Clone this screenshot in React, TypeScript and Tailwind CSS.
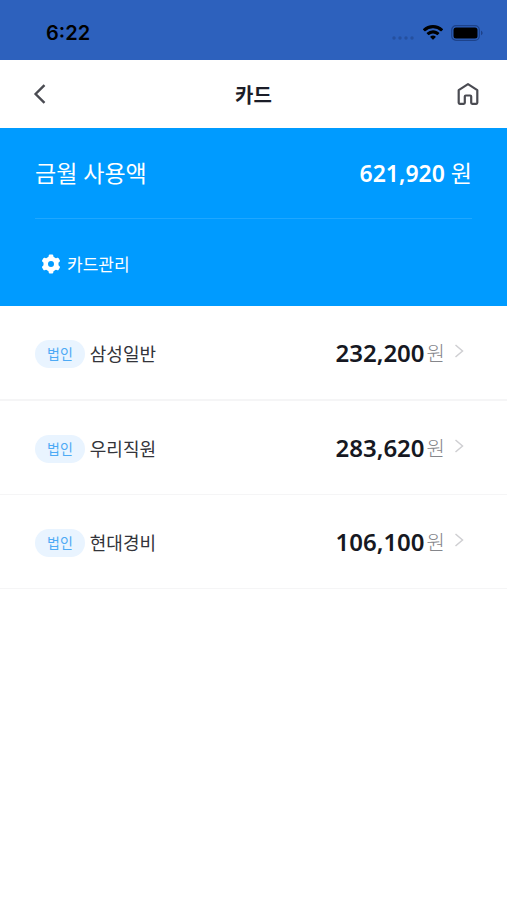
const cards = [
  { id: 1, type: "법인", name: "삼성일반", amount: 232200 },
  { id: 2, type: "법인", name: "우리직원", amount: 283620 },
  { id: 3, type: "법인", name: "현대경비", amount: 106100 },
]

function StatusBar() {
  return (
    <div className="flex h-15 items-center justify-between bg-[#2d61bd] pt-1.5 pr-6 pl-[46px] text-black">
      <span className="font-['Inter',sans-serif] text-[20px] leading-6 font-semibold">6:22</span>

      <div className="flex items-center gap-2">
        <svg className="mt-2.5 h-1 w-6 text-[#25509f]" viewBox="0 0 24 4" fill="currentColor">
          <circle cx="3" cy="2" r="1.7" />
          <circle cx="9" cy="2" r="1.7" />
          <circle cx="15" cy="2" r="1.7" />
          <circle cx="21" cy="2" r="1.7" />
        </svg>
        <svg className="h-4 w-5" viewBox="0 0 20 16" fill="currentColor">
          <path d="M10 0c3.800 0 7.300 1.500 9.900 4 .2.200.2.500 0 .7l-1.500 1.500c-.2.200-.5.200-.7 0A11 11 0 0 0 10 3.200a11 11 0 0 0-7.700 3c-.2.200-.5.200-.7 0L.1 4.700c-.2-.2-.2-.5 0-.7C2.700 1.500 6.200 0 10 0z" />
          <path d="M10 5.300c2.400 0 4.600.9 6.200 2.500.2.200.2.500 0 .7l-1.500 1.500c-.2.200-.5.200-.7 0a5.900 5.900 0 0 0-8 0c-.2.200-.5.200-.7 0L3.800 8.500c-.2-.2-.2-.5 0-.7A8.900 8.900 0 0 1 10 5.300z" />
          <path d="M10 10.500c1 0 1.900.4 2.600 1 .2.200.2.500 0 .7l-2.200 2.300c-.2.200-.6.200-.8 0l-2.200-2.300c-.2-.2-.2-.5 0-.7.700-.6 1.600-1 2.600-1z" />
        </svg>
        <svg className="h-4 w-8" viewBox="0 0 32 16">
          <rect x=".7" y=".7" width="27.600" height="14.600" rx="4.300" fill="none" stroke="#1d428a" strokeWidth="1.200" />
          <rect x="2.500" y="2.500" width="24" height="11" rx="2.500" fill="#000" />
          <path d="M30 5.800c1 .4 1.600 1.200 1.600 2.200S31 9.800 30 10.200z" fill="#1d428a" />
        </svg>
      </div>
    </div>
  )
}

function Header() {
  return (
    <header className="grid h-17 grid-cols-[1fr_auto_1fr] items-center bg-white px-[27px] text-[#4a4b52]">
      <button aria-label="뒤로" className="w-6 justify-self-start">
        <svg className="size-6" viewBox="0 0 24 24" fill="none" stroke="currentColor" strokeWidth="2.400">
          <path d="M17.500 3.200L8.600 12l8.900 8.800" />
        </svg>
      </button>
      <h1 className="pt-1 text-[20px] leading-7 font-bold text-[#1b1d28]">카드</h1>
      <button aria-label="홈" className="w-6 justify-self-end">
        <svg className="size-6" viewBox="0 0 24 24" fill="none" stroke="currentColor" strokeWidth="2.200" strokeLinejoin="round">
          <path d="M12 2.200L2.700 8.200v12.600c0 .6.400 1 1 1h4.100c.6 0 1-.4 1-1v-6.300c0-.6.400-1 1-1h4.400c.6 0 1 .4 1 1v6.300c0 .6.400 1 1 1h4.100c.6 0 1-.4 1-1V8.200z" />
        </svg>
      </button>
    </header>
  )
}

function GearIcon() {
  return (
    <svg className="size-5" viewBox="0 0 20 20" fill="none" stroke="currentColor">
      <circle cx="10" cy="10" r="5.300" strokeWidth="4.600" />
      {[0, 60, 120, 180, 240, 300].map((angle) => (
        <path
          key={angle}
          d="M8.500 3.500l.3-1.900h2.400l.3 1.900z"
          strokeWidth="2.200"
          strokeLinejoin="round"
          transform={`rotate(${angle} 10 10)`}
        />
      ))}
    </svg>
  )
}

export default function App() {
  const total = cards.reduce((sum, card) => sum + card.amount, 0)

  return (
    <div className="min-h-screen bg-white font-['Noto_Sans','Noto_Sans_CJK_KR',sans-serif]">
      <StatusBar />
      <Header />

      {/* 금월 사용액 */}
      <section className="h-[178px] bg-[#009bff] px-[35px] text-white">
        <div className="flex h-[91px] items-center justify-between border-b border-[#1fa7ff]">
          <h2 className="text-[23px] leading-8">금월 사용액</h2>
          <p className="text-[23px] leading-8">
            <span className="font-semibold">{total.toLocaleString("en-US")}</span> 원
          </p>
        </div>

        <button className="mt-8 ml-1.5 flex items-center gap-1.5 text-[17px] leading-6">
          <GearIcon />
          <span className="pt-0.5">카드관리</span>
        </button>
      </section>

      {/* 카드 목록 */}
      <ul>
        {cards.map((card) => (
          <li key={card.id} className="border-b border-[#f5f5f6] first:border-b-2">
            <button className="flex h-[93px] w-full items-center justify-between pr-[42px] pl-[35px]">
              <span className="flex items-center gap-[5px] pt-0.5">
                <span className="rounded-full bg-[#e9f4ff] px-3 text-[14px] leading-7 text-[#4daaf5]">
                  {card.type}
                </span>
                <span className="text-[18px] leading-7 text-[#33343a]">{card.name}</span>
              </span>

              <span className="flex items-center">
                <span className="text-[24px] leading-8 font-semibold text-[#161822]">
                  {card.amount.toLocaleString("en-US")}
                </span>
                <span className="ml-0.5 pt-0.5 text-[20px] leading-8 font-light text-[#85868b]">원</span>
                <svg className="mb-1 ml-2 h-4 w-3" viewBox="0 0 12 16" fill="none" stroke="#cfcfd2" strokeWidth="1.500">
                  <path d="M2.500 2l7 6-7 6" />
                </svg>
              </span>
            </button>
          </li>
        ))}
      </ul>
    </div>
  )
}
